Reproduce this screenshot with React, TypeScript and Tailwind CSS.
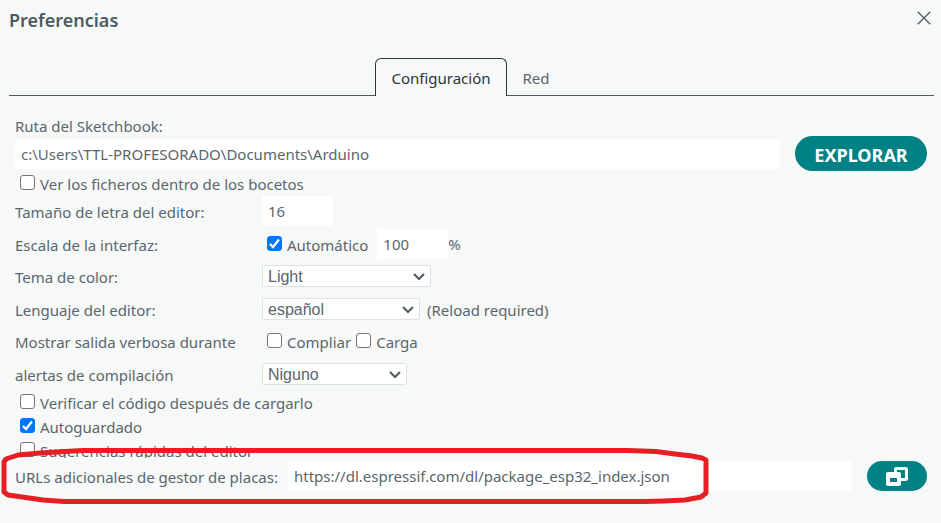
import React, { useState } from 'react';

const LABEL = 'w-[247px] shrink-0 pt-0.5';

function Check({ id, label, defaultChecked }: { id: string; label: string; defaultChecked?: boolean }) {
  const [checked, setChecked] = useState(!!defaultChecked);

  return (
    <div className="flex items-center gap-[5px] ml-[5px]">
      <span className="relative flex mb-px">
        <input
          id={id}
          type="checkbox"
          checked={checked}
          onChange={(e) => setChecked(e.target.checked)}
          className="appearance-none w-[15px] h-[15px] rounded-[3px] border border-[#767676] bg-white checked:bg-[#0075ff] checked:border-[#0075ff]"
        />
        {checked && (
          <svg viewBox="0 0 15 15" className="absolute inset-0 w-[15px] h-[15px] pointer-events-none">
            <path d="M3 8l3 3 6-7.5" fill="none" stroke="#fff" strokeWidth="2.2" />
          </svg>
        )}
      </span>
      <label htmlFor={id} className="pt-0.5">{label}</label>
    </div>
  );
}

function Select({ id, options, className }: { id: string; options: string[]; className: string }) {
  return (
    <div className={`relative h-[22px] ${className}`}>
      <select
        id={id}
        className="appearance-none block w-full h-full pt-px pl-[5px] pr-6 bg-white border border-[#dae3e3] rounded-xs font-['Liberation_Sans',sans-serif] text-base leading-5"
      >
        {options.map((option) => (
          <option key={option}>{option}</option>
        ))}
      </select>
      <svg viewBox="0 0 12 8" className="absolute right-[6px] top-[8px] w-3 h-2 pointer-events-none">
        <path d="M1 1l5 5 5-5" fill="none" stroke="#4e5b61" strokeWidth="2" />
      </svg>
    </div>
  );
}

const inputClass = 'h-[30px] px-1.5 bg-white rounded-xs';

export default function App() {
  const [tab, setTab] = useState('config');

  const tabClass = (active: boolean) =>
    active
      ? 'h-[38px] px-[15px] pt-px border border-b-0 border-[#2c353a] rounded-t-[6px] bg-[#f7f9f9] text-[#2c353a]'
      : 'h-[38px] px-4 pt-0.5';

  return (
    <div className="relative min-h-screen bg-[#f7f9f9] text-[#5a666c] font-['Noto_Sans',sans-serif] text-[15px] leading-5">
      <header className="flex items-center justify-between h-10 pl-[9px] pr-2.5">
        <h1 className="text-lg font-semibold text-[#4e5b61]">Preferencias</h1>
        <button type="button" aria-label="Cerrar" className="mb-1">
          <svg viewBox="0 0 14 14" className="w-3.5 h-3.5">
            <path d="M0.7 0.7l12.6 12.6M13.3 0.7L0.7 13.3" fill="none" stroke="#4e5b61" strokeWidth="1.3" />
          </svg>
        </button>
      </header>

      {/* Tabs */}
      <nav className="flex items-end h-14 ml-[9px] mr-[7px] border-b border-[#4e5b61]">
        <div className="flex -mb-px mx-auto pr-0.5">
          <button type="button" onClick={() => setTab('config')} className={tabClass(tab === 'config')}>
            Configuración
          </button>
          <button type="button" onClick={() => setTab('red')} className={tabClass(tab === 'red')}>
            Red
          </button>
        </div>
      </nav>

      <main className="pt-5 pl-[15px] pr-3.5">
        <label htmlFor="sketchbook" className="block h-5">Ruta del Sketchbook:</label>
        <div className="flex items-center gap-[15px] h-[35px]">
          <input id="sketchbook" className={`${inputClass} flex-1 min-w-0`} defaultValue="c:\Users\TTL-PROFESORADO\Documents\Arduino" />
          <button type="button" className="h-[35px] w-[132px] pt-0.5 rounded-full bg-[#008184] text-white text-lg font-bold">
            EXPLORAR
          </button>
        </div>
        <div className="flex items-center h-[25px] pb-0.5">
          <Check id="files" label="Ver los ficheros dentro de los bocetos" />
        </div>

        <div className="flex items-center h-[30px]">
          <label htmlFor="font-size" className={LABEL}>Tamaño de letra del editor:</label>
          <input id="font-size" className={`${inputClass} w-[71px]`} defaultValue="16" />
        </div>
        <div className="flex items-center h-[30px] mt-[3px]">
          <label htmlFor="scale" className={LABEL}>Escala de la interfaz:</label>
          <Check id="auto" label="Automático" defaultChecked />
          <input id="scale" className={`${inputClass} w-[71px] ml-[9px]`} defaultValue="100" />
          <span>%</span>
        </div>
        <div className="flex items-center h-[34px]">
          <label htmlFor="theme" className={LABEL}>Tema de color:</label>
          <Select id="theme" options={['Light', 'Dark']} className="w-[169px]" />
        </div>
        <div className="flex items-center h-8">
          <label htmlFor="language" className={LABEL}>Lenguaje del editor:</label>
          <Select id="language" options={['español', 'English']} className="w-[158px]" />
          <span className="ml-[7px] pt-0.5">(Reload required)</span>
        </div>
        <div className="flex items-center h-8">
          <span className={LABEL}>Mostrar salida verbosa durante</span>
          <Check id="compile" label="Compliar" />
          <Check id="upload" label="Carga" />
        </div>
        <div className="flex items-center h-[33px]">
          <label htmlFor="warnings" className={LABEL}>alertas de compilación</label>
          <Select id="warnings" options={['Niguno', 'Todo']} className="w-[145px]" />
        </div>

        <div className="flex flex-col h-[68px]">
          <div className="flex items-center h-6 shrink-0">
            <Check id="verify" label="Verificar el código después de cargarlo" />
          </div>
          <div className="flex items-center h-6 shrink-0">
            <Check id="autosave" label="Autoguardado" defaultChecked />
          </div>
          <div className="flex items-center h-6 shrink-0">
            <Check id="suggestions" label="Sugerencias rápidas del editor" />
          </div>
        </div>

        <div className="relative flex items-center gap-[15px] pt-[3px] bg-[#f7f9f9]">
          <div className="flex items-center flex-1 min-w-0">
            <label htmlFor="urls" className="w-[273px] shrink-0 whitespace-nowrap pt-0.5">URLs adicionales de gestor de placas:</label>
            <input id="urls" className={`${inputClass} flex-1 min-w-0`} defaultValue="https://dl.espressif.com/dl/package_esp32_index.json" />
          </div>
          <button type="button" aria-label="Editar URLs" className="flex items-center justify-center w-[60px] h-[30px] rounded-full bg-[#008184] text-white">
            <svg viewBox="0 0 22 19" className="w-[22px] h-[19px]">
              <rect x="9.5" y="1.5" width="11" height="11" rx="1" fill="none" stroke="currentColor" strokeWidth="3" />
              <rect x="0" y="5" width="15" height="14" rx="2" fill="currentColor" />
              <rect x="4" y="11" width="7" height="4" fill="#008184" />
            </svg>
          </button>
        </div>
      </main>

      {/* Hand-drawn highlight around the URLs field */}
      <svg viewBox="0 0 712 60" className="absolute left-0 top-[446px] w-[712px] h-[60px] pointer-events-none">
        <path
          d="M82 4.5L628 4.5L656 5.5L675 8L692 10L702 12L706 14V47L701 51L685 54L664 55L645 55.5H64L43 54L22 51L8 49L4 46V16L6 13L18 9L40 7L82 4.5"
          fill="none"
          stroke="#e71f25"
          strokeWidth="5"
          strokeLinejoin="round"
        />
      </svg>
    </div>
  );
}
